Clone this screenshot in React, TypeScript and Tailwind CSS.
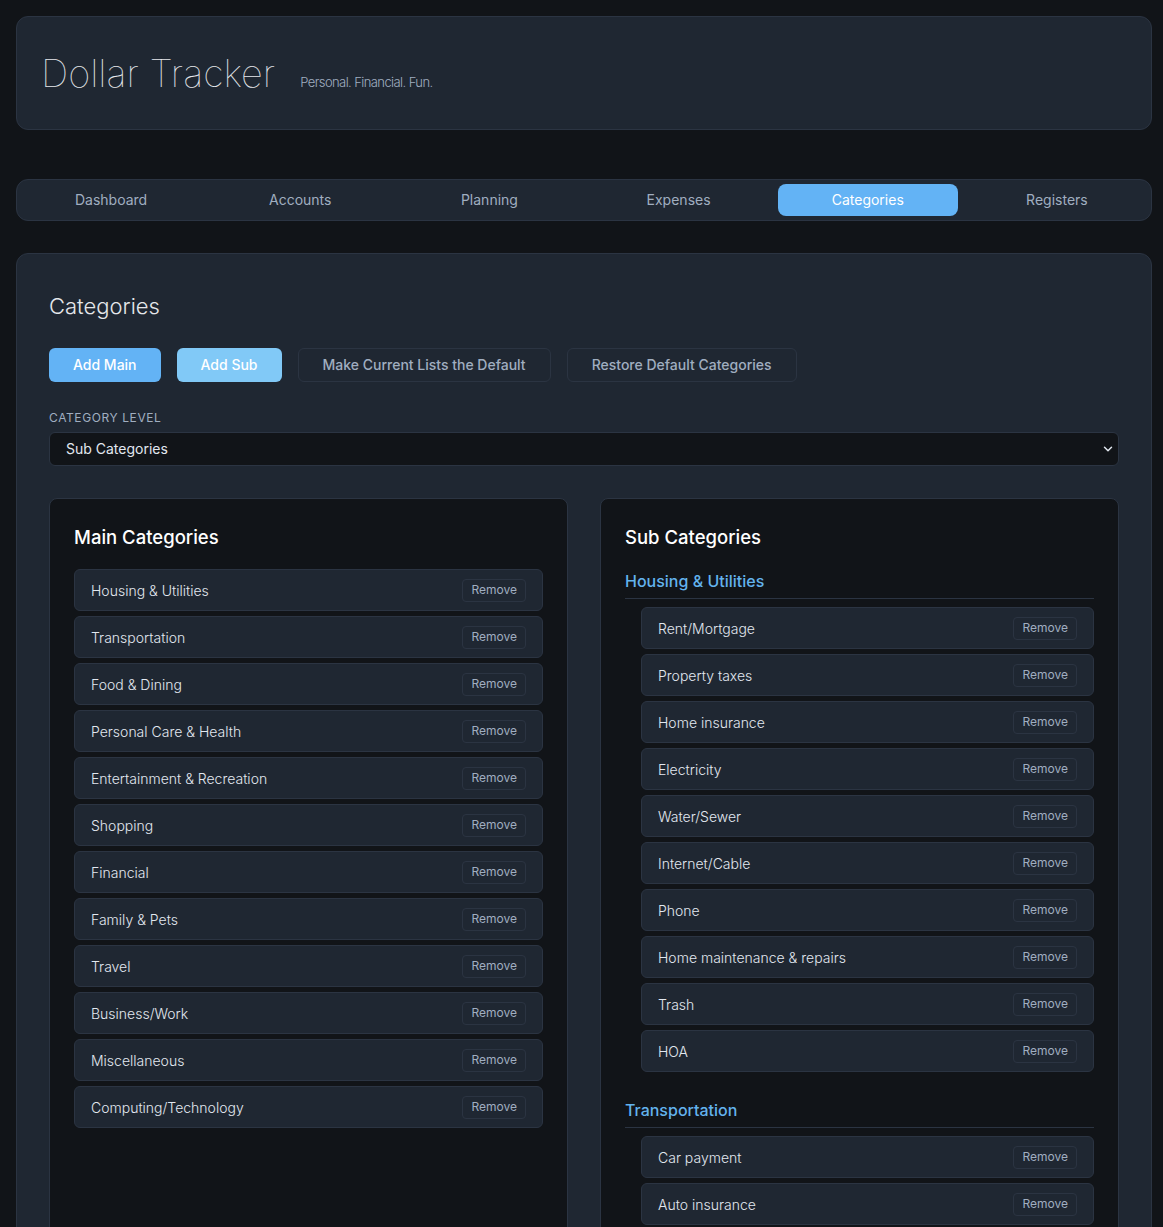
import { ChevronDown } from "lucide-react";

const TABS = ["Dashboard", "Accounts", "Planning", "Expenses", "Categories", "Registers"];

const MAIN = [
  "Housing & Utilities",
  "Transportation",
  "Food & Dining",
  "Personal Care & Health",
  "Entertainment & Recreation",
  "Shopping",
  "Financial",
  "Family & Pets",
  "Travel",
  "Business/Work",
  "Miscellaneous",
  "Computing/Technology",
];

const SUBS: { group: string; items: string[] }[] = [
  {
    group: "Housing & Utilities",
    items: [
      "Rent/Mortgage",
      "Property taxes",
      "Home insurance",
      "Electricity",
      "Water/Sewer",
      "Internet/Cable",
      "Phone",
      "Home maintenance & repairs",
      "Trash",
      "HOA",
    ],
  },
  {
    group: "Transportation",
    items: ["Car payment", "Auto insurance", "Gas/Fuel", "Maintenance & repairs", "Parking & tolls"],
  },
];

function Row({ label }: { label: string }) {
  return (
    <div className="flex h-[42px] items-center justify-between rounded-md border border-[#2b3442] bg-[#1f2732] px-4">
      <span className="pt-px text-sm font-light text-[#e2e8f0]">{label}</span>
      <button className="h-[23px] rounded border border-[#2b3442] px-2 text-xs text-[#a0aec0]">Remove</button>
    </div>
  );
}

export default function App() {
  return (
    <div
      className="min-h-screen bg-[#111418] py-4 pr-[11px] pl-4 text-[#e2e8f0]"
      style={{ fontFamily: "Inter, 'Noto Sans', sans-serif" }}
    >
      <header className="flex items-baseline rounded-xl border border-[#2b3442] bg-[#1f2732] px-6 py-8">
        <h1 className="text-[38px] leading-[48px] font-thin text-[#e5e7eb]">Dollar Tracker</h1>
        <span className="ml-[25px] text-[13px] font-light tracking-[-0.045em] text-[#a0aec0]">
          Personal. Financial. Fun.
        </span>
      </header>

      <nav className="mt-[49px] grid grid-cols-6 gap-[9px] rounded-xl border border-[#2b3442] bg-[#1f2732] p-1">
        {TABS.map((t) => (
          <button
            key={t}
            className={
              t === "Categories"
                ? "h-8 rounded-lg bg-[#63b3f5] text-sm text-white"
                : "h-8 rounded-lg text-sm text-[#a0aec0]"
            }
          >
            {t}
          </button>
        ))}
      </nav>

      <main className="mt-[32px] rounded-xl border border-[#2b3442] bg-[#1f2732] px-8 pt-8 pb-8">
        <h2 className="text-[22px] leading-[40px] font-light text-[#e5e7eb]">Categories</h2>

        <div className="mt-[22px] flex gap-4">
          <button className="h-[34px] rounded-md bg-[#63b3f5] px-6 text-sm font-medium text-white">Add Main</button>
          <button className="h-[34px] rounded-md bg-[#81c9f7] px-6 text-sm font-medium text-white">Add Sub</button>
          <button className="h-[34px] rounded-md border border-[#2b3442] px-6 text-sm font-medium text-[#a0aec0]">
            Make Current Lists the Default
          </button>
          <button className="h-[34px] rounded-md border border-[#2b3442] px-6 text-sm font-medium text-[#a0aec0]">
            Restore Default Categories
          </button>
        </div>

        <label className="mt-[28px] block text-xs leading-4 tracking-wider text-[#a0aec0] uppercase">
          Category Level
        </label>
        <div className="relative mt-[6px]">
          <select
            defaultValue="sub"
            className="h-[34px] w-full appearance-none rounded-md border border-[#2b3442] bg-[#111418] px-4 text-sm text-[#e2e8f0] outline-none"
          >
            <option value="main">Main Categories</option>
            <option value="sub">Sub Categories</option>
          </select>
          <ChevronDown
            className="pointer-events-none absolute top-1/2 right-[4px] h-[14px] w-[14px] -translate-y-1/2 text-[#e2e8f0]"
            strokeWidth={2.5}
          />
        </div>

        <div className="mt-[32px] grid grid-cols-2 gap-8">
          <section className="rounded-lg border border-[#2b3442] bg-[#111418] p-6">
            <h3 className="text-[18.5px] leading-7 font-medium text-white">Main Categories</h3>
            <div className="mt-[18px] flex flex-col gap-[5px]">
              {MAIN.map((m) => (
                <Row key={m} label={m} />
              ))}
            </div>
          </section>

          <section className="rounded-lg border border-[#2b3442] bg-[#111418] p-6">
            <h3 className="text-[18.5px] leading-7 font-medium text-white">Sub Categories</h3>
            <div className="mt-[18px] flex flex-col gap-[26px]">
              {SUBS.map((g) => (
                <div key={g.group}>
                  <h4 className="border-b border-[#2b3442] pb-[5px] text-base leading-6 font-medium text-[#63b3ed]">
                    {g.group}
                  </h4>
                  <div className="mt-2 flex flex-col gap-[5px] pl-4">
                    {g.items.map((i) => (
                      <Row key={i} label={i} />
                    ))}
                  </div>
                </div>
              ))}
            </div>
          </section>
        </div>
      </main>
    </div>
  );
}
